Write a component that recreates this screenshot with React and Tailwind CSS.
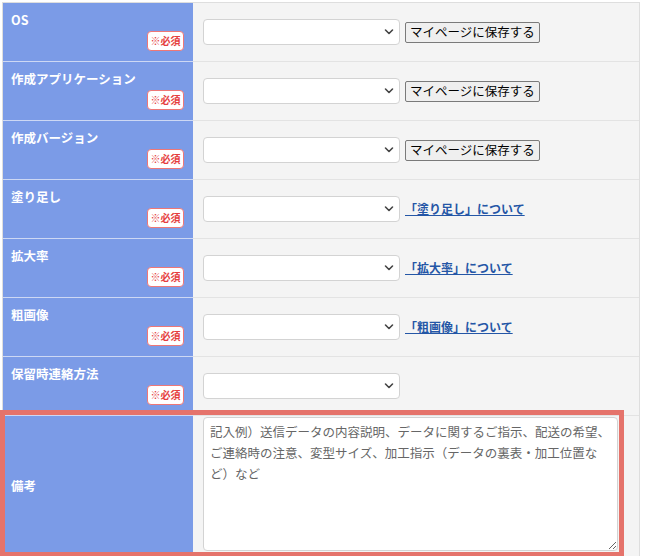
import React from "react";

const font = { fontFamily: '"Noto Sans CJK JP", "Noto Sans", sans-serif' };

function Badge() {
  return (
    <span className="inline-flex items-center justify-center w-[37px] h-[20px] rounded-[4px] border border-[#ee7777] bg-white text-[#e53e3e] text-[10px] font-bold leading-none">
      ※必須
    </span>
  );
}

function Chevron() {
  return (
    <svg width="10" height="7" viewBox="0 0 10 7" className="absolute right-[6px] top-1/2 -translate-y-1/2 pointer-events-none">
      <path d="M1.5 1.5 L5 5 L8.5 1.5" fill="none" stroke="#444" strokeWidth="1.6" strokeLinecap="round" strokeLinejoin="round" />
    </svg>
  );
}

function Select() {
  return (
    <div className="relative w-[197px] h-[26px]">
      <div className="w-full h-full rounded-[4px] border border-[#d3d3d3] bg-white" />
      <Chevron />
    </div>
  );
}

function Row({ label, extra }) {
  return (
    <div className="flex h-[59px] border-b border-[#e3e3e3]">
      <div className="w-[190px] shrink-0 bg-[#7b9be7] border-b border-[#cdd8f4] -mb-px flex flex-col pl-[8px] pr-[9px] pt-[8px]">
        <div className="text-white text-[12.5px] font-bold leading-[18px] h-[18px]">{label}</div>
        <div className="flex justify-end mt-[2px]">
          <Badge />
        </div>
      </div>
      <div className="flex-1 flex items-center pl-[10px] gap-[5px]">
        <Select />
        {extra}
      </div>
    </div>
  );
}

function SaveBtn() {
  return (
    <button className="h-[21px] px-[4px] border border-[#7a7a7a] rounded-[2px] bg-[#efefef] text-[12.5px] text-black leading-none">
      マイページに保存する
    </button>
  );
}

function Link({ children }) {
  return (
    <a className="text-[#2456a6] underline text-[12px] font-bold leading-none cursor-pointer">{children}</a>
  );
}

export default function App() {
  const rows = [
    { label: "OS", extra: <SaveBtn /> },
    { label: "作成アプリケーション", extra: <SaveBtn /> },
    { label: "作成バージョン", extra: <SaveBtn /> },
    { label: "塗り足し", extra: <Link>「塗り足し」について</Link> },
    { label: "拡大率", extra: <Link>「拡大率」について</Link> },
    { label: "粗画像", extra: <Link>「粗画像」について</Link> },
    { label: "保留時連絡方法", extra: null },
  ];
  return (
    <div className="w-[645px] h-[556px] bg-white overflow-hidden pt-[2px] pl-[2px]" style={font}>
      <div className="w-[638px] border border-[#dedede] bg-[#f4f4f4]">
        {rows.map((r) => (
          <Row key={r.label} {...r} />
        ))}
        <div className="relative flex h-[140px]">
          <div className="w-[190px] shrink-0 bg-[#7b9be7] flex items-center pl-[8px]">
            <div className="text-white text-[12.5px] font-bold">備考</div>
          </div>
          <div className="flex-1 pl-[10px] pt-[1px]">
            <textarea
              className="w-[415px] h-[134px] border border-[#d3d3d3] rounded-[4px] bg-white px-[6px] py-[3px] text-[12.5px] leading-[21px] text-[#666] placeholder-[#666] resize-y outline-none"
              style={font}
              placeholder="記入例）送信データの内容説明、データに関するご指示、配送の希望、ご連絡時の注意、変型サイズ、加工指示（データの裏表・加工位置など）など"
            />
          </div>
          <div className="absolute left-[-3px] top-[-6px] w-[624px] h-[147px] border-[5px] border-[#e5736b] pointer-events-none" />
        </div>
      </div>
    </div>
  );
}
